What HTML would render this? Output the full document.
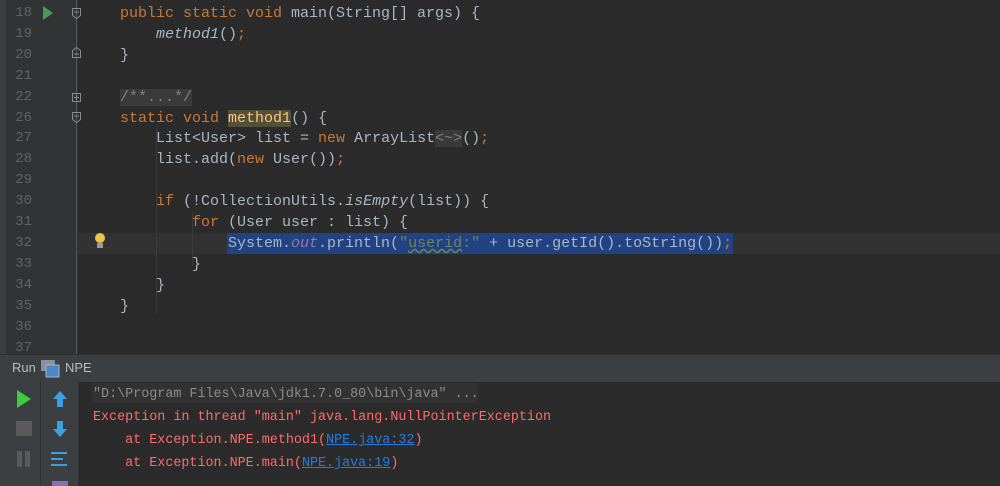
<!DOCTYPE html>
<html><head><style>
body{margin:0;width:1000px;height:486px;overflow:hidden;background:#2b2b2b;position:relative;font-family:"Liberation Mono",monospace}
.ed{position:absolute;left:0;top:0;width:1000px;height:354px;background:#2b2b2b}
.gut{position:absolute;left:6px;top:0;width:72px;height:354px;background:#313335}
.strip{position:absolute;left:0;top:0;width:6px;height:354px;background:#3c3f41}
.ln{position:absolute;left:8px;width:24px;text-align:right;color:#606366;font-size:14px;line-height:21px}
.cl{position:absolute;left:120px;font-size:15px;line-height:21px;color:#a9b7c6;white-space:pre}
.k{color:#cc7832}.s{color:#6a8759}.i{font-style:italic}.f{color:#9876aa;font-style:italic}
.cur{position:absolute;left:78px;top:233px;width:922px;height:21px;background:#323232}
.sel{position:absolute;left:227px;top:233px;width:506px;height:21px;background:#214283}
.vl{position:absolute;width:1px;background:#3b3b3b}
.hdr{position:absolute;left:0;top:354px;width:1000px;height:27px;background:#3c3f41;border-top:1px solid #2d2f30}
.tb1{position:absolute;left:0;top:381px;width:40px;height:105px;background:#3c3f41;border-right:1px solid #2f3133}
.tb2{position:absolute;left:41px;top:381px;width:37px;height:105px;background:#3c3f41;border-right:1px solid #2f3133}
.con{position:absolute;left:93px;font-family:"Liberation Mono",monospace;font-size:13.4px;line-height:23px;white-space:pre;color:#ff6b68}
.lk{color:#287bde;text-decoration:underline}
</style></head><body>
<div class="ed"></div>
<div class="strip"></div>
<div class="gut"></div>
<div class="cur"></div>
<div class="sel"></div>
<div class="vl" style="left:76px;top:0;height:354px;background:#555"></div>
<div class="vl" style="left:156px;top:128px;height:186px"></div>
<div class="vl" style="left:192px;top:212px;height:54px"></div>
<div class="ln" style="top:3px">18</div><div class="ln" style="top:24px">19</div><div class="ln" style="top:45px">20</div><div class="ln" style="top:66px">21</div><div class="ln" style="top:87px">22</div><div class="ln" style="top:108px">26</div><div class="ln" style="top:128px">27</div><div class="ln" style="top:149px">28</div><div class="ln" style="top:170px">29</div><div class="ln" style="top:191px">30</div><div class="ln" style="top:212px">31</div><div class="ln" style="top:233px">32</div><div class="ln" style="top:254px">33</div><div class="ln" style="top:275px">34</div><div class="ln" style="top:296px">35</div><div class="ln" style="top:317px">36</div><div class="ln" style="top:338px">37</div>
<svg style="position:absolute;left:0;top:0" width="110" height="354">
<polygon points="43,6 53,13 43,20" fill="#499c54"/>
<g fill="none" stroke="#8a8a8a" stroke-width="1">
<path d="M72.5,8.5h8v7l-4,3l-4,-3z"/><path d="M74,12h5"/>
<path d="M72.5,57.5h8v-7l-4,-3l-4,3z"/><path d="M74,54h5"/>
<rect x="72.5" y="93.5" width="8" height="8"/><path d="M74,97.5h5M76.5,95v5"/>
<path d="M72.5,112.5h8v7l-4,3l-4,-3z"/><path d="M74,116h5"/>
</g>
<circle cx="100" cy="238" r="5" fill="#e8c44c"/><rect x="97" y="243" width="6" height="5" fill="#999"/>
</svg>
<div class="cl" style="top:3px"><span class="k">public static void</span> main(String[] args) {</div>
<div class="cl" style="top:24px">    <span class="i">method1</span>()<span class="k">;</span></div>
<div class="cl" style="top:45px">}</div>
<div class="cl" style="top:87px"><span style="color:#808080;background:#3a3a3a">/**...*/</span></div>
<div class="cl" style="top:108px"><span class="k">static void</span> <span style="background:#52503a;color:#ffc66d">method1</span>() {</div>
<div class="cl" style="top:128px">    List&lt;User&gt; list = <span class="k">new</span> ArrayList<span style="color:#808080;background:#3a3a3a">&lt;~&gt;</span>()<span class="k">;</span></div>
<div class="cl" style="top:149px">    list.add(<span class="k">new</span> User())<span class="k">;</span></div>
<div class="cl" style="top:191px">    <span class="k">if</span> (!CollectionUtils.<span class="i">isEmpty</span>(list)) {</div>
<div class="cl" style="top:212px">        <span class="k">for</span> (User user : list) {</div>
<div class="cl" style="top:233px">            System.<span class="f">out</span>.println(<span class="s">"<u style="text-decoration-style:wavy;text-decoration-color:#6a8759">userid</u>:"</span> + user.getId().toString())<span class="k">;</span></div>
<div class="cl" style="top:254px">        }</div>
<div class="cl" style="top:275px">    }</div>
<div class="cl" style="top:296px">}</div>
<div class="hdr"><span style="position:absolute;left:12px;top:5px;font-family:'Liberation Sans',sans-serif;font-size:13px;color:#bbb">Run</span>
<svg style="position:absolute;left:41px;top:5px" width="20" height="18"><rect x="0" y="0" width="14" height="11" fill="#8a9199"/><rect x="5" y="5" width="13" height="12" fill="#4a88c7" stroke="#9fb3c8"/></svg>
<span style="position:absolute;left:65px;top:5px;font-family:'Liberation Sans',sans-serif;font-size:13px;color:#bbb">NPE</span></div>
<div class="tb1"></div><div class="tb2"></div>
<svg style="position:absolute;left:0;top:381px" width="78" height="105">
<polygon points="17,9 31,18 17,27" fill="#3ccc3c"/>
<rect x="16" y="40" width="16" height="15" fill="#5a5a5a"/>
<rect x="17" y="70" width="5" height="16" fill="#5a5a5a"/><rect x="25" y="70" width="5" height="16" fill="#5a5a5a"/>
<path d="M53,18l7,-8l7,8h-4v8h-6v-8z" fill="#3d9ee0"/>
<path d="M53,48l7,8l7,-8h-4v-8h-6v8z" fill="#3d9ee0"/>
<g stroke="#3d9ee0" stroke-width="2" fill="none"><path d="M51,72h16M51,78h12M51,84h16"/></g>
<rect x="52" y="100" width="16" height="5" fill="#8a6fb0"/>
</svg>
<div style="position:absolute;left:92px;top:383px;width:386px;height:20px;background:#323232"></div>
<div class="con" style="top:383px;color:#8c8c8c">"D:\Program Files\Java\jdk1.7.0_80\bin\java" ...</div>
<div class="con" style="top:406px">Exception in thread "main" java.lang.NullPointerException</div>
<div class="con" style="top:429px">    at Exception.NPE.method1(<span class="lk">NPE.java:32</span>)</div>
<div class="con" style="top:452px">    at Exception.NPE.main(<span class="lk">NPE.java:19</span>)</div>
</body></html>
